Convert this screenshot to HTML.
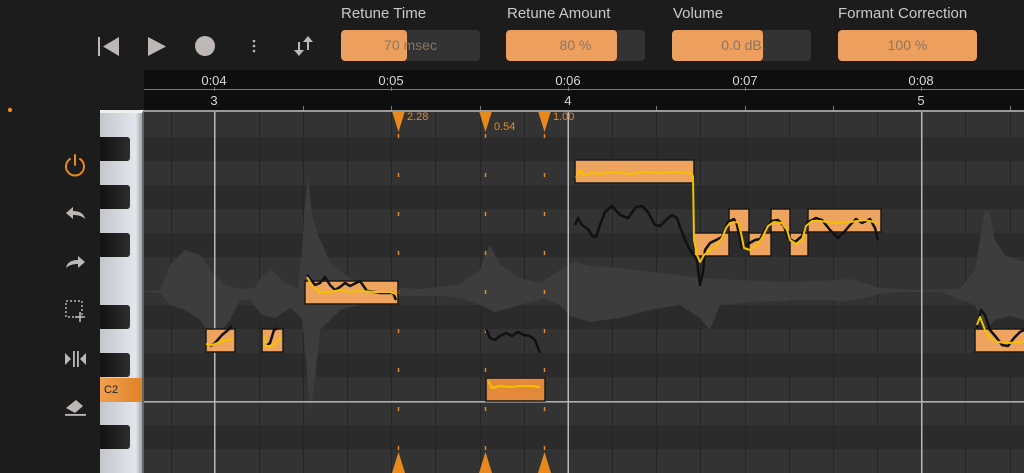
<!DOCTYPE html>
<html><head><meta charset="utf-8"><style>
html,body{margin:0;padding:0;width:1024px;height:473px;overflow:hidden;background:#1c1c1c;font-family:"Liberation Sans",sans-serif}
.lbl{position:absolute;top:5px;color:#c9c9c9;font-size:15px}
.sl{position:absolute;top:30px;height:31px;width:139px;background:#333;border-radius:4px;overflow:hidden}
.sl .f{position:absolute;left:0;top:0;bottom:0;background:#eda05e;border-radius:4px}
.sl .t{position:absolute;left:0;right:0;top:7px;text-align:center;color:#8a7562;font-size:14px}
</style></head><body>
<div class="lbl" style="left:341px">Retune Time</div>
<div class="lbl" style="left:507px">Retune Amount</div>
<div class="lbl" style="left:673px">Volume</div>
<div class="lbl" style="left:838px">Formant Correction</div>
<div class="sl" style="left:341px"><div class="f" style="width:66px"></div><div class="t">70 msec</div></div>
<div class="sl" style="left:506px"><div class="f" style="width:111px"></div><div class="t">80 %</div></div>
<div class="sl" style="left:672px"><div class="f" style="width:91px"></div><div class="t">0.0 dB</div></div>
<div class="sl" style="left:838px"><div class="f" style="width:139px"></div><div class="t">100 %</div></div>
<svg width="1024" height="473" style="position:absolute;left:0;top:0" xmlns="http://www.w3.org/2000/svg">
<g fill="#bdb8b5">
<rect x="98" y="37" width="2" height="19"/><polygon points="119,37 119,56 103,46.5"/>
<polygon points="148,37 148,56 166,46.5"/>
<circle cx="205" cy="46" r="10"/>
<circle cx="254" cy="41" r="1.3"/><circle cx="254" cy="46" r="1.3"/><circle cx="254" cy="51" r="1.3"/>
<rect x="298" y="42" width="2" height="10"/><polygon points="294,50 304,50 299,56"/>
<rect x="307" y="40" width="2" height="10"/><polygon points="303,42 313,42 308,36"/>
</g>
<circle cx="10" cy="110" r="2.2" fill="#e8891e"/>
<g fill="none" stroke="#e8891e" stroke-width="2" stroke-linecap="round"><path d="M70,159 A9,9 0 1 0 80,159"/><path d="M75,155 V165"/></g>
<g fill="#bdb8b5">
<path d="M66,213 L73,207 L73,211 C79,211 84,213 85,219 C82,216 78,215 73,215 L73,219 Z"/>
<path d="M85,262 L78,256 L78,260 C72,260 67,262 66,268 C69,265 73,264 78,264 L78,268 Z"/>
<polygon points="65,353 65,365 71,359"/><rect x="73" y="351" width="1.8" height="16"/><rect x="77" y="351" width="1.8" height="16"/><polygon points="86,353 86,365 80,359"/>
<polygon points="66,408 76,400 83,406 75,413"/><rect x="65" y="414" width="21" height="1.8"/>
</g>
<g fill="none" stroke="#bdb8b5" stroke-width="1.4" stroke-dasharray="2,2"><rect x="66" y="301" width="16" height="16"/></g>
<g stroke="#bdb8b5" stroke-width="1.6"><path d="M80,312 V322 M75,317 H85"/></g>
<rect x="144" y="70" width="880" height="40" fill="#0e0e0e"/>
<rect x="144" y="89" width="880" height="1" fill="#777"/>
<g fill="#d8d8d8" font-size="13" text-anchor="middle">
<text x="214" y="85">0:04</text><text x="391" y="85">0:05</text><text x="568" y="85">0:06</text><text x="745" y="85">0:07</text><text x="921" y="85">0:08</text>
<text x="214" y="105">3</text><text x="568" y="105">4</text><text x="921" y="105">5</text>
</g>
<g stroke="#777" stroke-width="1"><path d="M214.5,87V91M391.5,87V91M568.5,87V91M745.5,87V91M921.5,87V91M303.5,106V110M391.5,106V110M480.5,106V110M656.5,106V110M745.5,106V110M833.5,106V110M1010.5,106V110"/></g>
<rect x="144" y="110" width="880" height="363" fill="#333"/>
<g fill="#2b2b2b">
<rect x="144" y="137" width="880" height="24"/><rect x="144" y="185" width="880" height="24"/><rect x="144" y="233" width="880" height="24"/><rect x="144" y="305" width="880" height="24"/><rect x="144" y="353" width="880" height="24"/><rect x="144" y="425" width="880" height="24"/>
</g>
<g stroke="#262626" stroke-width="1">
<path d="M171.5,110V473M259.5,110V473M303.5,110V473M347.5,110V473M391.5,110V473M435.5,110V473M480.5,110V473M524.5,110V473M612.5,110V473M656.5,110V473M700.5,110V473M745.5,110V473M789.5,110V473M833.5,110V473M877.5,110V473M965.5,110V473M1010.5,110V473"/>
</g>
<path fill="#3d3d3d" d="M144,291 L160,290 170,265 185,250 200,255 214,275 225,285 240,289 255,288 262,275 272,270 285,283 298,288 302,250 305,205 308,175 312,215 318,235 330,262 345,275 360,283 380,285 400,288 420,289 440,287 460,284 480,270 485,255 490,245 500,265 520,278 540,283 560,270 575,262 590,266 620,268 650,272 680,275 700,278 740,280 780,282 820,281 850,279 880,288 920,290 960,289 975,270 985,210 990,215 995,240 1005,255 1024,262 L1024,320 1010,316 995,320 985,330 975,305 940,292 900,292 880,294 850,301 800,300 750,302 720,305 710,330 700,318 680,305 650,310 620,318 590,322 570,316 560,305 545,298 530,302 510,308 495,312 480,305 460,298 440,296 400,296 380,300 360,305 340,310 320,330 315,380 310,412 306,360 302,318 290,308 275,318 262,315 250,300 240,300 230,320 214,340 200,320 185,310 170,305 160,293 144,292Z"/>
<rect x="144" y="401" width="880" height="1.6" fill="#b0b0b0"/>
<g fill="#b8b8b8"><rect x="214" y="110" width="1.5" height="363"/><rect x="567.5" y="110" width="1.5" height="363"/><rect x="921" y="110" width="1.5" height="363"/></g>
<rect x="144" y="110" width="880" height="2" fill="#999"/>
<g fill="#e8891e">
<polygon points="392,111 405,111 398.5,132"/><polygon points="479,111 492,111 485.5,132"/><polygon points="538,111 551,111 544.5,132"/>
<polygon points="398.5,452 392,473 405,473"/><polygon points="485.5,452 479,473 492,473"/><polygon points="544.5,452 538,473 551,473"/>
</g>
<g stroke="#e8891e" stroke-width="1.5" stroke-dasharray="4,35"><path d="M398.5,134V450M485.5,134V450M544.5,134V450"/></g>
<g fill="#e8891e" font-size="11"><text x="407" y="120">2.28</text><text x="494" y="130">0.54</text><text x="553" y="120">1.00</text></g>
<g fill="#eea35f" stroke="#1a1a1a" stroke-width="1.5">
<rect x="206" y="329" width="29" height="23"/><rect x="262" y="329" width="21" height="23"/><rect x="305" y="281" width="93" height="23"/>
<rect x="486" y="378" width="59" height="23" fill="#e28a3a"/>
<rect x="575" y="160" width="119" height="23"/>
<rect x="694" y="233" width="35" height="23"/><rect x="729" y="209" width="20" height="23"/><rect x="749" y="233" width="22" height="23"/><rect x="771" y="209" width="19" height="23"/><rect x="790" y="233" width="18" height="23"/><rect x="808" y="209" width="73" height="23"/>
<rect x="975" y="329" width="52" height="23"/>
</g>
<g fill="none" stroke="#111" stroke-width="2.5" stroke-linejoin="round">
<polyline points="210,346 214,344 222,335 228,330 232,326"/>
<polyline points="266,346 270,343 274,330 278,328"/>
<polyline points="307,275 315,285 320,283 325,277 330,285 335,290 340,287 345,283 350,286 356,283 360,281 367,291 375,292 380,293 393,293 396,300"/>
<polyline points="486,329 490,338 495,340 500,336 506,333 512,336 518,332 524,335 530,336 535,340 540,353"/>
<polyline points="575,225 578,218 582,225 588,229 592,236 596,237 600,225 605,212 612,206 620,215 628,218 636,207 642,206 648,212 655,225 660,226 666,220 672,215 677,218 680,227 685,240 690,250 697,260 700,285 703,272 705,250 710,243 716,240 722,237 728,222 734,219 737,225 742,248 748,244 755,240 760,239 766,228 772,221 778,220 784,226 788,238 795,242 802,236 808,222 816,218 822,220 830,230 838,238 845,231 850,225 856,219 862,223 870,219 875,228 878,240"/>
<polyline points="977,328 981,310 985,315 990,330 996,337 1002,345 1008,346 1014,338 1020,332 1024,330"/>
</g>
<g fill="none" stroke="#f2c200" stroke-width="2" stroke-linejoin="round">
<polyline points="206,344 212,345 220,342 228,340 233,339"/>
<polyline points="264,336 266,346 272,346 278,340 282,338"/>
<polyline points="307,277 313,287 320,292 330,292 340,290 350,292 360,291 375,292 390,292 396,294"/>
<polyline points="488,381 492,388 500,386 510,387 520,386 530,386 540,387"/>
<polyline points="576,178 579,170 584,175 592,173 600,174 615,172 630,174 645,172 660,173 675,172 690,173 693,176 694,240 697,255 700,262 704,255 710,250 716,246 722,238 726,228 730,223 738,222 741,233 744,248 750,250 757,245 762,238 768,226 774,222 782,223 787,230 790,240 796,244 802,240 806,226 812,221 820,221 835,223 850,222 865,220 878,223"/>
<polyline points="977,325 980,317 985,330 990,338 998,342 1008,343 1020,342 1024,341"/>
</g>
</svg>
<div style="position:absolute;left:100px;top:110px;width:44px;height:363px;background:linear-gradient(90deg,#c3c6cc,#e3e6ec 85%,#a0a3a8);border-top:3px solid #f0f0f0;box-sizing:border-box;border-right:2px solid #666"></div>
<div style="position:absolute;left:100px;top:137px;width:30px;height:24px;background:linear-gradient(90deg,#111,#2e2e2e);border-radius:0 3px 3px 0"></div>
<div style="position:absolute;left:100px;top:185px;width:30px;height:24px;background:linear-gradient(90deg,#111,#2e2e2e);border-radius:0 3px 3px 0"></div>
<div style="position:absolute;left:100px;top:233px;width:30px;height:24px;background:linear-gradient(90deg,#111,#2e2e2e);border-radius:0 3px 3px 0"></div>
<div style="position:absolute;left:100px;top:305px;width:30px;height:24px;background:linear-gradient(90deg,#111,#2e2e2e);border-radius:0 3px 3px 0"></div>
<div style="position:absolute;left:100px;top:353px;width:30px;height:24px;background:linear-gradient(90deg,#111,#2e2e2e);border-radius:0 3px 3px 0"></div>
<div style="position:absolute;left:100px;top:425px;width:30px;height:24px;background:linear-gradient(90deg,#111,#2e2e2e);border-radius:0 3px 3px 0"></div>
<div style="position:absolute;left:100px;top:378px;width:42px;height:24px;background:linear-gradient(90deg,#f0a050,#e08326);font-size:11px;color:#222;line-height:24px;padding-left:4px;box-sizing:border-box">C2</div>
</body></html>
